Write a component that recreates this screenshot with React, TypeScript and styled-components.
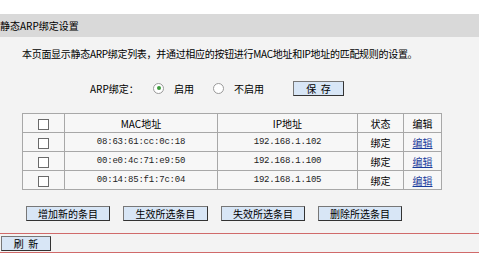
import React from 'react';
import styled, { createGlobalStyle } from 'styled-components';

const GlobalStyle = createGlobalStyle`
  html, body {
    margin: 0;
    padding: 0;
    background: #fff;
  }
  body {
    font-family: "Noto Sans CJK SC", "Noto Sans", sans-serif;
    font-size: 10px;
    color: #000;
  }
`;

const rows = [
  { mac: '08:63:61:cc:0c:18', ip: '192.168.1.102', state: '绑定' },
  { mac: '00:e0:4c:71:e9:50', ip: '192.168.1.100', state: '绑定' },
  { mac: '00:14:85:f1:7c:04', ip: '192.168.1.105', state: '绑定' },
];

// Style
const Page = styled.div`
  padding-top: 14px;
`;

const TitleBar = styled.div`
  height: 23px;
  line-height: 23px;
  background: #d9d9d9;
  font-size: 10px;
  white-space: nowrap;
`;

const Content = styled.div`
  background: #f3f3f3;
  padding: 10px 0 12px;
`;

const Desc = styled.p`
  margin: 0 0 0 22px;
  line-height: 14px;
  letter-spacing: -0.3px;
  white-space: nowrap;
`;

const ArpRow = styled.div`
  display: flex;
  align-items: center;
  height: 16px;
  margin: 19px 0 0 90px;
`;

const ArpLabel = styled.span`
  width: 63px;
`;

const Radio = styled.span<{ $checked?: boolean }>`
  position: relative;
  width: 9px;
  height: 9px;
  border: 1px solid #9a9a9a;
  border-radius: 50%;
  background: #fff;
  margin-right: 10px;
  &::after {
    content: '';
    display: ${(p) => (p.$checked ? 'block' : 'none')};
    position: absolute;
    left: 2.5px;
    top: 2.5px;
    width: 4px;
    height: 4px;
    border-radius: 50%;
    background: #3c9a3c;
  }
`;

const RadioText = styled.span<{ $gap: number }>`
  margin-right: ${(p) => p.$gap}px;
`;

const Button = styled.button<{ $w: number }>`
  width: ${(p) => p.$w}px;
  height: 15px;
  padding: 0;
  border: 1px solid #333;
  border-top-color: #777;
  border-left-color: #777;
  background: #d8e6f6;
  font-family: "Noto Sans CJK SC", sans-serif;
  font-size: 10px;
  line-height: 13px;
  color: #000;
  white-space: pre;
`;

const Table = styled.table`
  margin: 17px 0 0 22px;
  width: 419px;
  border-collapse: collapse;
  table-layout: fixed;
  td {
    height: 18px;
    padding: 0;
    border: 1px solid #a8a8a8;
    text-align: center;
    font-size: 10px;
    background: #f7f7f7;
  }
`;

const Mono = styled.td`
  && {
    font-family: "Liberation Mono", monospace;
    font-size: 9px;
    letter-spacing: -0.2px;
    color: #222;
  }
`;

const Check = styled.span`
  display: inline-block;
  vertical-align: middle;
  width: 9px;
  height: 9px;
  border: 1px solid #6a6a6a;
  background: #fff;
`;

const EditLink = styled.a`
  color: #1a3c9c;
  text-decoration: underline;
`;

const ButtonRow = styled.div`
  display: flex;
  gap: 13px;
  margin: 16px 0 0 26px;
`;

const RefreshBar = styled.div`
  height: 20px;
  box-sizing: border-box;
  background: #f3f3f3;
  border-top: 1px solid #d06a6a;
  border-bottom: 1px solid #d06a6a;
  padding: 2px 0 0 1px;
`;

// Component
function App() {
  return (
    <>
      <GlobalStyle />
      <Page>
        <TitleBar>静态ARP绑定设置</TitleBar>
        <Content>
          <Desc>本页面显示静态ARP绑定列表，并通过相应的按钮进行MAC地址和IP地址的匹配规则的设置。</Desc>
          <ArpRow>
            <ArpLabel>ARP绑定：</ArpLabel>
            <Radio $checked />
            <RadioText $gap={19}>启用</RadioText>
            <Radio />
            <RadioText $gap={29}>不启用</RadioText>
            <Button $w={51}>保  存</Button>
          </ArpRow>
          <Table>
            <colgroup>
              <col style={{ width: 42 }} />
              <col style={{ width: 153 }} />
              <col style={{ width: 140 }} />
              <col style={{ width: 46 }} />
              <col style={{ width: 38 }} />
            </colgroup>
            <tbody>
              <tr>
                <td><Check /></td>
                <td>MAC地址</td>
                <td>IP地址</td>
                <td>状态</td>
                <td>编辑</td>
              </tr>
              {rows.map((r) => (
                <tr key={r.mac}>
                  <td><Check /></td>
                  <Mono>{r.mac}</Mono>
                  <Mono>{r.ip}</Mono>
                  <td>{r.state}</td>
                  <td><EditLink href="#">编辑</EditLink></td>
                </tr>
              ))}
            </tbody>
          </Table>
          <ButtonRow>
            <Button $w={84}>增加新的条目</Button>
            <Button $w={85}>生效所选条目</Button>
            <Button $w={84}>失效所选条目</Button>
            <Button $w={84}>删除所选条目</Button>
          </ButtonRow>
        </Content>
        <RefreshBar>
          <Button $w={50}>刷  新</Button>
        </RefreshBar>
      </Page>
    </>
  );
}

export default App;
